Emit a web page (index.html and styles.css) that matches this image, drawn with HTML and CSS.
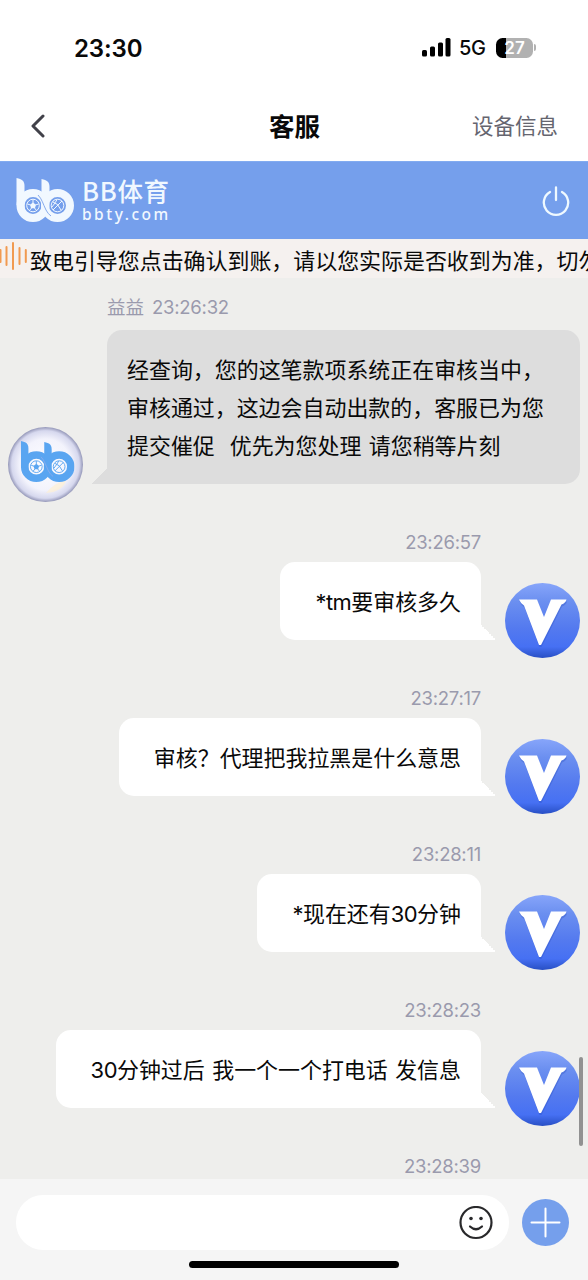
FILE: index.html
```html
<!DOCTYPE html>
<html lang="zh-CN">
<head>
<meta charset="utf-8">
<title>客服</title>
<link rel="stylesheet" href="styles.css">
</head>
<body>
<svg class="defs" width="0" height="0" aria-hidden="true">
  <defs>
    <linearGradient id="vbg" x1="0" y1="0" x2="0" y2="1">
      <stop offset="0" stop-color="#87a5fa"/><stop offset=".25" stop-color="#6b8ff0"/><stop offset=".6" stop-color="#547aef"/><stop offset=".85" stop-color="#4670f3"/><stop offset="1" stop-color="#284fc4"/>
    </linearGradient>
    <radialGradient id="pearl" cx=".5" cy=".5" r=".5">
      <stop offset="0" stop-color="#fdfdff"/><stop offset=".68" stop-color="#f3f3fc"/><stop offset=".9" stop-color="#d6d8ee"/><stop offset="1" stop-color="#9497b8"/>
    </radialGradient>
    <symbol id="bb" viewBox="0 0 58 45">
      <g fill="none" stroke="currentColor" stroke-width="8">
        <circle cx="17" cy="27.5" r="12.5"/>
        <circle cx="41.5" cy="27.5" r="12.5"/>
      </g>
      <path d="M.5 0C6 1 8.500 3 8.500 8V30L.5 27Z" fill="currentColor"/>
      <path d="M25.500 1C31 2 33.500 4 33.500 9V22L27 34L25.500 20Z" fill="currentColor"/>
      <path class="seam" d="M22 17C26 21 27 26 30 32Q32 36 35 38" fill="none" stroke-width="1"/>
      <g fill="none" stroke="currentColor" stroke-width="1">
        <circle cx="17" cy="27.500" r="6.300"/><circle cx="41.500" cy="27.500" r="6.300"/>
        <path d="M17 21.500V25M11.500 26L14.500 27M22.500 26L19.500 27M13.500 32.500L15.500 30M20.500 32.500L18.500 30"/>
        <path d="M37 32L46 23M37 24Q42 25 45 32M36 29Q40 24 41 21.500"/>
      </g>
      <path d="M17 24.500L20 26.800L18.900 30.300H15.100L14 26.800Z" fill="currentColor"/>
    </symbol>
    <symbol id="vip" viewBox="0 0 75 75">
      <circle cx="37.500" cy="37.500" r="37.500" fill="url(#vbg)"/>
      <path transform="translate(.5 2)" d="M14 16.500H32L39 34L46 16.500H61.500Q60.500 20 56.500 21.500L36 62H34L19 22.500Q16 21 14 16.500Z" fill="#2449b8" opacity=".3"/>
      <path d="M14 16.500H32L39 34L46 16.500H61.500Q60.500 20 56.500 21.500L36 62H34L19 22.500Q16 21 14 16.500Z" fill="#fff"/>
    </symbol>
  </defs>
</svg>
<div class="phone">
  <header class="status">
    <span class="clock">23:30</span>
    <div class="signals">
      <svg class="bars" viewBox="0 0 29 19"><rect x="0" y="12" width="5" height="6.500" rx="1.500"/><rect x="8" y="8.500" width="5" height="10" rx="1.500"/><rect x="16" y="4.500" width="5" height="14" rx="1.500"/><rect x="23.500" y="0" width="5" height="18.500" rx="1.500"/></svg>
      <span class="net">5G</span>
      <div class="battery"><span>27</span></div><i class="cap"></i>
    </div>
  </header>
  <nav class="nav">
    <svg class="back" viewBox="0 0 14 24"><path d="M12 2L2 12L12 22"/></svg>
    <h1>客服</h1>
    <span class="device">设备信息</span>
  </nav>
  <section class="brand">
    <svg class="brand-logo"><use href="#bb"/></svg>
    <div class="brand-text"><b>BB体育</b><span>bbty.com</span></div>
    <svg class="power" viewBox="0 0 28 30"><path d="M8 6A12.200 12.200 0 1 0 20 6M14 1.500V14"/></svg>
  </section>
  <section class="notice">
    <svg class="wave" viewBox="0 0 28 30"><path d="M.5 9V21M6.500 6V24M13 2V28M19.500 7V23M25.800 9V21"/></svg>
    <span>致电引导您点击确认到账，请以您实际是否收到为准，切勿</span>
  </section>
  <main class="chat">
    <article class="msg in">
      <svg class="avatar" viewBox="0 0 75 75"><circle cx="37.500" cy="37.500" r="37.500" fill="url(#pearl)"/><path d="M38 66Q54 65 58 54Q48 54 38 66" fill="#fff0cf" opacity=".65"/><use href="#bb" x="12.500" y="14" width="54" height="42" color="#59a5f1"/></svg>
      <div class="body">
        <time><span class="name">益益</span>23:26:32</time>
        <div class="bubble">经查询，您的这笔款项系统正在审核当中，<br>审核通过，这边会自动出款的，客服已为您<br>提交催促&nbsp; 优先为您处理 请您稍等片刻</div>
      </div>
    </article>
    <article class="msg out"><div class="body"><time>23:26:57</time><div class="bubble"><span class="latin">*tm</span>要审核多久</div></div><svg class="avatar"><use href="#vip"/></svg></article>
    <article class="msg out"><div class="body"><time>23:27:17</time><div class="bubble">审核？代理把我拉黑是什么意思</div></div><svg class="avatar"><use href="#vip"/></svg></article>
    <article class="msg out"><div class="body"><time>23:28:11</time><div class="bubble"><span class="latin">*</span>现在还有<span class="latin">30</span>分钟</div></div><svg class="avatar"><use href="#vip"/></svg></article>
    <article class="msg out"><div class="body"><time>23:28:23</time><div class="bubble"><span class="latin">30</span>分钟过后 我一个一个打电话 发信息</div></div><svg class="avatar"><use href="#vip"/></svg></article>
    <article class="msg out last"><div class="body"><time>23:28:39</time></div></article>
    <i class="scrollbar"></i>
  </main>
  <footer class="composer">
    <div class="controls">
      <div class="input"><svg class="smile" viewBox="0 0 34 34"><circle cx="17" cy="16.500" r="15.500"/><path d="M11 20.500Q17 26 23 20.500"/><circle class="eye" cx="12" cy="12.500" r="1.800"/><circle class="eye" cx="22" cy="12.500" r="1.800"/></svg></div>
      <svg class="plus" viewBox="0 0 47 47"><circle cx="23.500" cy="23.500" r="23.500"/><path d="M9.500 23.500H37.500M23.500 9.500V37.500"/></svg>
    </div>
    <i class="home"></i>
  </footer>
</div>
</body>
</html>
```
FILE: styles.css
```css
* { box-sizing: border-box; }
body { margin: 0; font-family: Inter, "Noto Sans CJK SC", sans-serif; color: #090909; }
.defs { position: absolute; }
svg { display: block; flex-shrink: 0; }
.phone { width: 588px; height: 1280px; display: flex; flex-direction: column; overflow: hidden; background: #fff; }

.status { height: 93px; padding: 2px 52px 0 74px; display: flex; align-items: center; justify-content: space-between; }
.clock { padding-top: 1px; font-size: 24px; font-weight: 600; letter-spacing: -.1px; }
.signals { display: flex; align-items: center; }
.bars { width: 29px; height: 19px; }
.net { width: 27px; margin: 1px 10px 0 8px; font-size: 20px; line-height: 24px; font-weight: 500; letter-spacing: -.3px; }
.battery { width: 37px; height: 20px; border-radius: 6.5px; background: linear-gradient(90deg, #000 10px, #b1b1b1 10px); color: #fff; font-size: 17px; line-height: 20px; font-weight: 600; text-align: center; }
.cap { width: 2px; height: 7px; margin-left: 1px; border-radius: 0 2px 2px 0; background: #b1b1b1; }

.nav { height: 68px; padding: 0 30px 2px 31px; display: grid; grid-template-columns: 1fr auto 1fr; align-items: center; }
.back { width: 14px; height: 24px; fill: none; stroke: #414149; stroke-width: 3; stroke-linecap: round; stroke-linejoin: round; }
.nav h1 { margin: 0; padding-top: 2px; font-size: 25.500px; line-height: 36px; font-weight: 600; }
.device { justify-self: end; padding-bottom: 1px; font-size: 21.500px; line-height: 32px; color: #65656f; }

.brand { height: 78px; padding: 0 18px 0 16px; display: flex; align-items: center; background: #759fec; border-top: 1px solid #82abf0; color: #f1f8ff; }
.brand-logo { width: 58px; height: 45px; }
.seam { stroke: #87abed; }
.brand-text { margin-left: 8px; display: flex; flex-direction: column; }
.brand-text b { font: 500 25.500px/30px "Noto Sans CJK SC", sans-serif; letter-spacing: .7px; margin-top: -4px; }
.brand-text span { font: 500 15.500px/18px "Noto Sans", sans-serif; letter-spacing: 2.500px; }
.power { width: 28px; height: 30px; margin-left: auto; fill: none; stroke: #eff9ff; stroke-width: 2.300; stroke-linecap: round; }

.notice { height: 39px; display: flex; align-items: center; overflow: hidden; background: #f5f1ef; font-size: 21.950px; line-height: 38px; white-space: nowrap; padding-top: 5px; }
.wave { width: 28px; height: 30px; margin: -10px 2px 0 0; fill: none; stroke: #f19a50; stroke-width: 2; stroke-linecap: round; }

.chat { position: relative; height: 901px; padding: 11px 8px 0; overflow: hidden; background: #eeeeec; }
.msg { display: flex; align-items: flex-end; gap: 24px; margin-bottom: 40px; }
.out { justify-content: flex-end; }
.avatar { width: 75px; height: 75px; margin-bottom: -18px; }
.msg time { display: block; height: 38px; font-size: 18.500px; line-height: 37px; color: #9a9aad; letter-spacing: -.25px; }
.in time { height: 41px; }
.name { margin-right: 8px; letter-spacing: 0; }
.out time { text-align: right; }
.bubble { position: relative; padding: 21px 20px 19px; border-radius: 15px; font-size: 21.950px; line-height: 38px; white-space: nowrap; word-spacing: 1.300px; }
.latin { letter-spacing: -.5px; }
.in .body { flex: 1; }
.in .bubble { background: #dddddd; border-bottom-left-radius: 0; }
.out .body { display: flex; flex-direction: column; align-items: flex-end; }
.out .bubble { padding-left: 35px; background: #fff; border-bottom-right-radius: 0; }
.bubble::after { content: ""; position: absolute; bottom: 0; width: 15px; height: 15px; }
.in .bubble::after { right: 100%; background: linear-gradient(135deg, transparent 50%, #dddddd 50%); }
.out .bubble::after { left: 100%; background: linear-gradient(225deg, transparent 50%, #fff 50%); }
.last { padding-right: 99px; }
.scrollbar { position: absolute; right: 5px; top: 779px; width: 4px; height: 89px; border-radius: 2px; background: #919191; }

.composer { height: 101px; padding: 16px 19px 0 16px; background: #f5f5f5; }
.controls { display: flex; align-items: center; gap: 13px; }
.input { flex: 1; height: 55px; padding-right: 16px; border-radius: 27px; background: #fff; display: flex; align-items: center; justify-content: flex-end; }
.smile { width: 34px; height: 34px; fill: none; stroke: #29292b; stroke-width: 2.200; stroke-linecap: round; }
.smile .eye { fill: #29292b; stroke: none; }
.plus { width: 47px; height: 47px; fill: #759fec; }
.plus path { stroke: #fff; stroke-width: 2; stroke-linecap: round; }
.home { display: block; width: 210px; height: 7px; margin: 11px 0 0 173px; border-radius: 4px; background: #000; }
```
